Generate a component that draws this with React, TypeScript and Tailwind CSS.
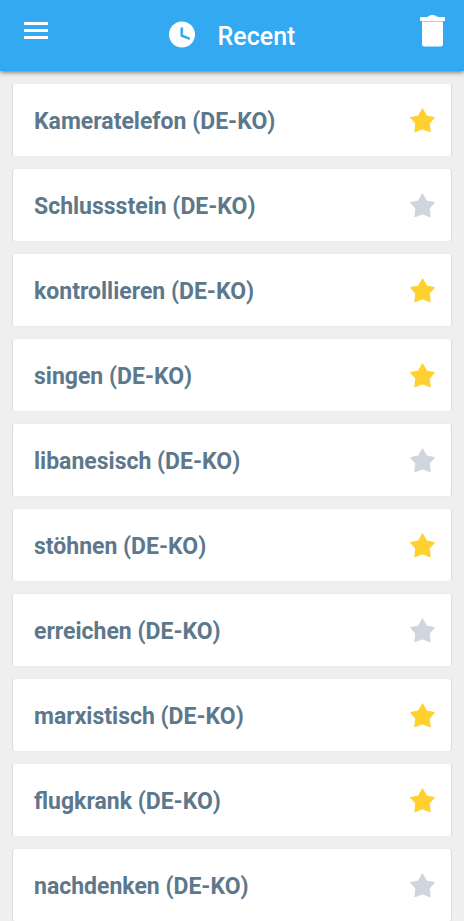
import React from "react";

const words = [
  { text: "Kameratelefon (DE-KO)", starred: true },
  { text: "Schlussstein (DE-KO)", starred: false },
  { text: "kontrollieren (DE-KO)", starred: true },
  { text: "singen (DE-KO)", starred: true },
  { text: "libanesisch (DE-KO)", starred: false },
  { text: "stöhnen (DE-KO)", starred: true },
  { text: "erreichen (DE-KO)", starred: false },
  { text: "marxistisch (DE-KO)", starred: true },
  { text: "flugkrank (DE-KO)", starred: true },
  { text: "nachdenken (DE-KO)", starred: false },
];

export default function App() {
  return (
    <div className="h-screen overflow-hidden bg-[#efefef] font-['Roboto',sans-serif]">
      <header className="relative flex h-[71px] items-start justify-between bg-[#33a9f2] pl-6 pr-[19px] text-white shadow-[0_1px_5px_rgba(0,0,0,0.6)]">
        <button type="button" aria-label="Menu" className="mt-[22px]">
          <svg width="24" height="17" viewBox="0 0 24 17" fill="currentColor">
            <path d="M0 0h24v3H0zM0 7h24v3H0zM0 14h24v3H0z" />
          </svg>
        </button>
        <h1 className="mt-[21px] flex items-center gap-[23px] pr-1 text-[25px] leading-8 font-medium">
          <svg width="26" height="32" viewBox="0 0 26 32" aria-hidden="true">
            <circle cx="13" cy="13.500" r="13" fill="currentColor" />
            <path d="M12.800 6.500v8.200l8 3.200" fill="none" stroke="#33a9f2" strokeWidth="2.600" />
          </svg>
          Recent
        </h1>
        <button type="button" aria-label="Delete all" className="mt-[15px]">
          <svg width="25" height="32" viewBox="0 0 25 32" fill="currentColor">
            <path d="M1 2h5q2 0 3-1 1-1 3.500-1T16 1q1 1 3 1h5q1 0 1 1v3H0V3q0-1 1-1zM2 6.500h21V29a2.500 2.500 0 0 1-2.500 2.500h-16A2.500 2.500 0 0 1 2 29z" />
          </svg>
        </button>
      </header>
      <ul className="flex flex-col gap-[13px] px-[13px] pt-[13px]">
        {words.map((word) => (
          <li
            key={word.text}
            className="flex h-[72px] shrink-0 items-center justify-between rounded-xs bg-white pl-[21px] pr-4 pt-1 shadow-[1px_0_1px_rgba(0,0,0,0.08),-1px_0_1px_rgba(0,0,0,0.08)]"
          >
            <span className="text-[23px] leading-7 font-bold text-[#5d788b]">{word.text}</span>
            <button type="button" aria-label="Favourite" aria-pressed={word.starred} className="pb-1">
              <svg
                width="25"
                height="25"
                viewBox="0 0 25 25"
                className={word.starred ? "text-[#ffd02e]" : "text-[#d0d5de]"}
                fill="currentColor"
              >
                <path
                  d="M12.500 1l4 7 7.700 1.500-5.100 5.900 1 8.200-7.600-2.800-7.600 2.800 1-8.200L.8 9.500 8.500 8z"
                  stroke="currentColor"
                  strokeWidth="1.200"
                  strokeLinejoin="round"
                />
              </svg>
            </button>
          </li>
        ))}
      </ul>
    </div>
  );
}
